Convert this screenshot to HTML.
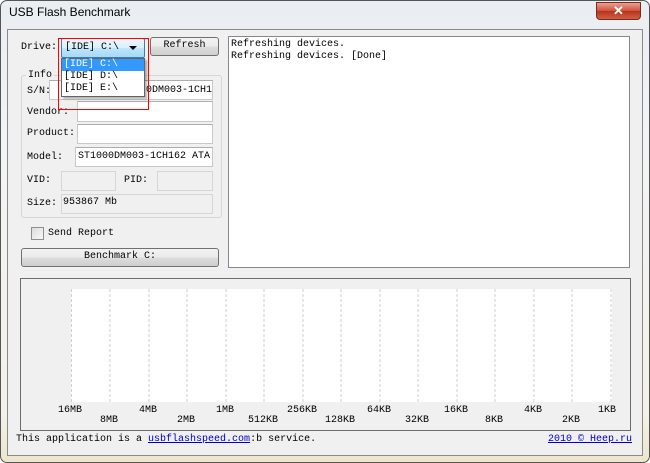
<!DOCTYPE html>
<html><head><style>
*{margin:0;padding:0;box-sizing:border-box}
body{width:650px;height:463px;background:#fff;position:relative;overflow:hidden;font-family:"Liberation Mono",monospace;font-size:10px;color:#000}
.a{position:absolute}
.box{position:absolute;background:#fff;border:1px solid #c8c8c8;border-top-color:#abadb3}
.gbox{position:absolute;background:#f0f0f0;border:1px solid #d6d6d6}
.lbl{position:absolute;white-space:pre;line-height:12px}
.btn{position:absolute;border:1px solid #707070;border-radius:3px;background:linear-gradient(#f2f2f2 0%,#ebebeb 50%,#dddddd 51%,#cfcfcf 100%);text-align:center;line-height:16px}
</style></head><body>
<div class="a" style="left:0;top:0;width:650px;height:463px;border:1px solid #555;border-radius:7px;background:linear-gradient(#e9eef3,#f3f4f6 30%,#f3f1e8 90%,#ece6cc)"></div>
<div class="a" style="left:9px;top:5px;font-family:'Liberation Sans',sans-serif;font-size:12px">USB Flash Benchmark</div>
<div class="a" style="left:596px;top:2px;width:45px;height:18px;border:1px solid #7a2a20;border-radius:0 0 4px 4px;background:linear-gradient(#e8a090,#d0503a 50%,#b73220 51%,#d06040);color:#fff;text-align:center;font:bold 13px 'Liberation Sans',sans-serif;line-height:16px">✕</div>
<div class="a" style="left:7px;top:29px;width:636px;height:427px;background:#f0f0f0;border:1px solid #8a8a8a"></div>

<div class="lbl" style="left:21px;top:42px">Drive:</div>
<div class="a" style="left:61px;top:38px;width:84px;height:20px;border:1px solid #3c7fb1;border-radius:2px;background:linear-gradient(#eaf6fd,#d9f0fc 50%,#bee6fd 51%,#a7d9f5)"></div>
<div class="lbl" style="left:65px;top:42px">[IDE] C:\</div>
<div class="a" style="left:129px;top:46px;border-left:4px solid transparent;border-right:4px solid transparent;border-top:4px solid #000"></div>
<div class="btn" style="left:150px;top:37px;width:69px;height:19px">Refresh</div>

<div class="gbox" style="left:21px;top:75px;width:201px;height:143px;border-radius:3px"></div>
<div class="lbl" style="left:26px;top:70px;background:#f0f0f0;padding:0 2px">Info</div>
<div class="lbl" style="left:27px;top:86px">S/N:</div>
<div class="box" style="left:49px;top:80px;width:164px;height:20px"></div>
<div class="a" style="left:146px;top:83px;width:66px;height:14px;overflow:hidden"><div class="lbl" style="left:0;top:2px">0DM003-1CH16</div></div>
<div class="lbl" style="left:27px;top:107px">Vendor:</div>
<div class="box" style="left:77px;top:101px;width:136px;height:21px"></div>
<div class="lbl" style="left:27px;top:128px">Product:</div>
<div class="box" style="left:77px;top:124px;width:136px;height:20px"></div>
<div class="lbl" style="left:27px;top:152px">Model:</div>
<div class="box" style="left:75px;top:147px;width:138px;height:20px"></div>
<div class="lbl" style="left:78px;top:151px">ST1000DM003-1CH162 ATA</div>
<div class="lbl" style="left:27px;top:175px">VID:</div>
<div class="gbox" style="left:61px;top:171px;width:55px;height:20px"></div>
<div class="lbl" style="left:124px;top:175px">PID:</div>
<div class="gbox" style="left:157px;top:171px;width:56px;height:20px"></div>
<div class="lbl" style="left:27px;top:198px">Size:</div>
<div class="gbox" style="left:61px;top:194px;width:152px;height:20px"></div>
<div class="lbl" style="left:63px;top:197px">953867 Mb</div>

<div class="a" style="left:31px;top:227px;width:13px;height:13px;border:1px solid #8e8f8f;background:linear-gradient(135deg,#dcdcdc,#fafafa)"></div>
<div class="lbl" style="left:48px;top:228px">Send Report</div>
<div class="btn" style="left:21px;top:248px;width:198px;height:19px">Benchmark C:</div>

<div class="box" style="left:228px;top:36px;width:402px;height:232px;border-color:#828790"></div>
<div class="lbl" style="left:231px;top:39px">Refreshing devices.
Refreshing devices. [Done]</div>

<div class="a" style="left:20px;top:278px;width:611px;height:153px;border:1px solid #6b6b6b"></div>
<div class="a" style="left:71px;top:289px;width:541px;height:113px;background:#fff"></div>
<svg class="a" style="left:0;top:0" width="650" height="463">
<g stroke="#cfcfcf" stroke-dasharray="3,2">
<line x1="71.5" y1="289" x2="71.5" y2="402"/><line x1="110" y1="289" x2="110" y2="402"/><line x1="149" y1="289" x2="149" y2="402"/><line x1="187" y1="289" x2="187" y2="402"/><line x1="226" y1="289" x2="226" y2="402"/><line x1="264" y1="289" x2="264" y2="402"/><line x1="303" y1="289" x2="303" y2="402"/><line x1="341" y1="289" x2="341" y2="402"/><line x1="380" y1="289" x2="380" y2="402"/><line x1="418" y1="289" x2="418" y2="402"/><line x1="457" y1="289" x2="457" y2="402"/><line x1="495" y1="289" x2="495" y2="402"/><line x1="534" y1="289" x2="534" y2="402"/><line x1="572" y1="289" x2="572" y2="402"/><line x1="611" y1="289" x2="611" y2="402"/>
</g>
<g font-family="Liberation Mono,monospace" font-size="10" text-anchor="middle">
<text x="70" y="412">16MB</text><text x="109" y="422">8MB</text><text x="148" y="412">4MB</text><text x="186" y="422">2MB</text><text x="225" y="412">1MB</text><text x="263" y="422">512KB</text><text x="302" y="412">256KB</text><text x="340" y="422">128KB</text><text x="379" y="412">64KB</text><text x="417" y="422">32KB</text><text x="456" y="412">16KB</text><text x="494" y="422">8KB</text><text x="533" y="412">4KB</text><text x="571" y="422">2KB</text><text x="607" y="412">1KB</text>
</g></svg>
<div class="lbl" style="left:16px;top:434px">This application is a <span style="color:#00c;text-decoration:underline">usbflashspeed.com</span>:b service.</div>
<div class="lbl" style="left:548px;top:434px;color:#00c;text-decoration:underline">2010 © Heep.ru</div>

<div class="a" style="left:61px;top:58px;width:84px;height:39px;background:#fff;border:1px solid #646464;box-shadow:2px 2px 2px rgba(0,0,0,.3)"></div>
<div class="a" style="left:62px;top:59px;width:82px;height:12px;background:#3399ff"></div>
<div class="lbl" style="left:64px;top:59px;color:#fff">[IDE] C:\</div>
<div class="lbl" style="left:64px;top:71px">[IDE] D:\</div>
<div class="lbl" style="left:64px;top:83px">[IDE] E:\</div>
<div class="a" style="left:58px;top:38px;width:91px;height:72px;border:1px solid #f00"></div>
</body></html>
